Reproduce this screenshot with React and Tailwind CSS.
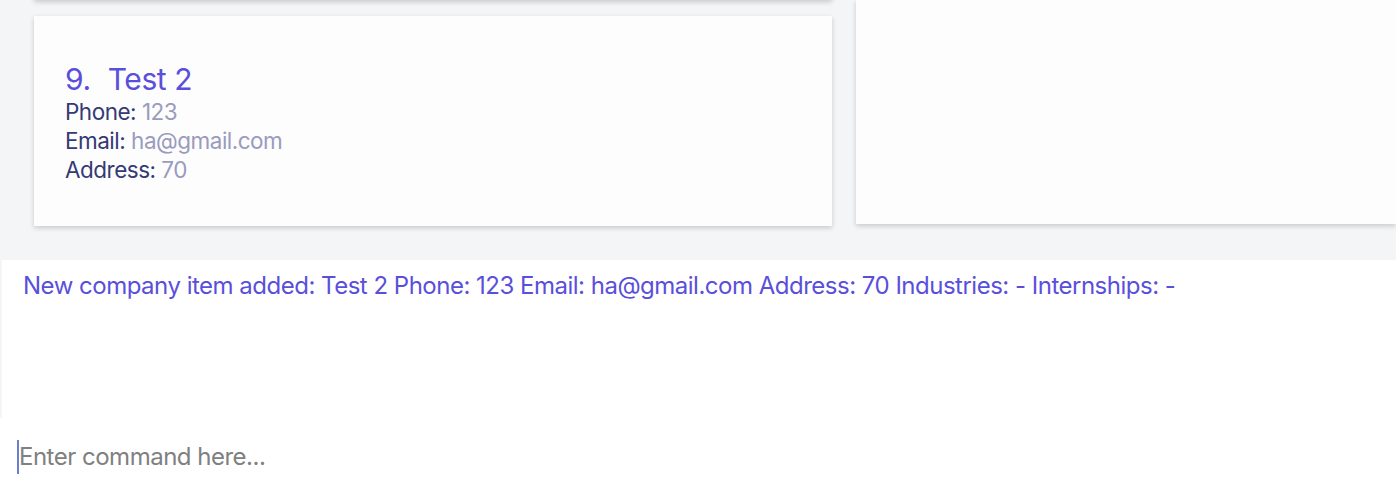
export default function App() {
  return (
    <div
      className="w-[1396px] h-[496px] bg-[#f4f5f7] overflow-hidden flex flex-col"
      style={{ fontFamily: 'Inter, "Noto Sans", sans-serif' }}
    >
      {/* Lists */}
      <div className="h-[260px] flex gap-6 shrink-0">
        <div className="w-[832px] pl-[34px] flex flex-col gap-4 -mt-[200px]">
          <div className="h-[200px] bg-[#fdfdfd] shadow-[0_2px_5px_rgba(0,0,0,0.18)] shrink-0" />
          <CompanyCard
            index={9}
            name="Test 2"
            phone="123"
            email="ha@gmail.com"
            address="70"
          />
        </div>
        <div className="flex-1 h-[224px] bg-[#fdfdfd] shadow-[0_2px_5px_rgba(0,0,0,0.18)]" />
      </div>

      {/* Result display */}
      <div className="h-[158px] ml-[2px] bg-white pl-[21px] pt-[11px] shrink-0">
        <p className="text-[24px] leading-[30px] text-[#5a4fdb] tracking-[-0.5px]">
          New company item added: Test 2 Phone: 123 Email: ha@gmail.com Address: 70 Industries: - Internships: -
        </p>
      </div>

      {/* Command box */}
      <div className="flex-1 bg-white pl-[17px] pt-[22px]">
        <div className="flex items-center h-[34px]">
          <span className="w-[2px] h-[34px] bg-[#6a7ed2]" />
          <span className="text-[24px] text-[#808080] tracking-[-0.5px]">Enter command here...</span>
        </div>
      </div>
    </div>
  );
}

function CompanyCard({ index, name, phone, email, address }) {
  return (
    <div className="h-[210px] bg-[#fdfdfd] shadow-[0_2px_5px_rgba(0,0,0,0.18)] shrink-0 pl-[31px] pt-[44px]">
      <h2 className="text-[30px] leading-[38px] text-[#5a4fdb] tracking-[-0.4px] flex">
        <span>{index}.</span>
        <span className="ml-[17px]">{name}</span>
      </h2>
      <div className="text-[22.5px] leading-[29px] tracking-[-0.5px] -mt-[1px]">
        <p>
          <span className="text-[#343a74]">Phone: </span>
          <span className="text-[#9a9bbd]">{phone}</span>
        </p>
        <p>
          <span className="text-[#343a74]">Email: </span>
          <span className="text-[#9a9bbd]">{email}</span>
        </p>
        <p>
          <span className="text-[#343a74]">Address: </span>
          <span className="text-[#9a9bbd]">{address}</span>
        </p>
      </div>
    </div>
  );
}
